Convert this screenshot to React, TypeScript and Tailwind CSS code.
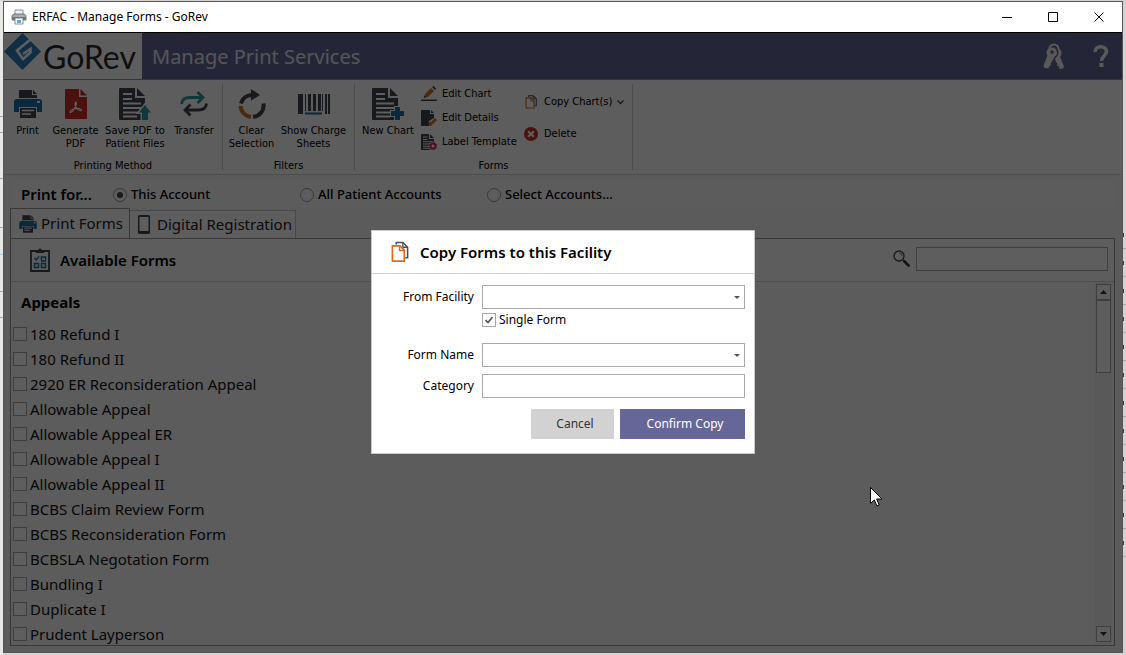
import React, { useState } from 'react';

const FORMS = [
  '180 Refund I',
  '180 Refund II',
  '2920 ER Reconsideration Appeal',
  'Allowable Appeal',
  'Allowable Appeal ER',
  'Allowable Appeal I',
  'Allowable Appeal II',
  'BCBS Claim Review Form',
  'BCBS Reconsideration Form',
  'BCBSLA Negotation Form',
  'Bundling I',
  'Duplicate I',
  'Prudent Layperson',
];

const ACCOUNT_OPTIONS = [
  { id: 'this', label: 'This Account' },
  { id: 'all', label: 'All Patient Accounts' },
  { id: 'select', label: 'Select Accounts...' },
];

const PrinterIcon = ({ className }: { className: string }) => (
  <svg className={className} viewBox="0 0 32 32">
    <path d="M7 2h13v5h5v3H7z" fill="#3f4450" />
    <path d="M21 2l4 4h-4z" fill="#3f4450" />
    <path d="M5 11h22a3 3 0 0 1 3 3v10h-5v-5H7v5H2V14a3 3 0 0 1 3-3z" fill="#1a73a8" />
    <rect x="25" y="13" width="3" height="2" fill="#fff" />
    <path d="M8 20h16v10H8z" fill="#3f4450" />
    <path d="M10 22.500h12M10 26h9" stroke="#fff" strokeWidth="1.500" />
  </svg>
);

const DocIcon = ({ className, children }: { className: string; children?: React.ReactNode }) => (
  <svg className={className} viewBox="0 0 32 32">
    <path d="M1 0h15v10h10v22H1a1 1 0 0 1-1-1V1a1 1 0 0 1 1-1z" fill="#3f4450" />
    <path d="M18 0l8 8h-8z" fill="#3f4450" />
    <path d="M4 6h9M4 11h9M4 15.500h18M4 20h18M4 24.500h18M4 28.500h14" stroke="#fff" strokeWidth="1.800" />
    {children}
  </svg>
);

const CopyIcon = ({ className }: { className: string }) => (
  <svg className={className} viewBox="0 0 20 22" fill="none">
    <path d="M5.500 3V1h7l5 5v11H15" stroke="#4a4f5c" strokeWidth="1.600" />
    <path d="M12.500 1v5h5" stroke="#4a4f5c" strokeWidth="1.400" />
    <path d="M1.500 4.500h8l4.500 4.500v11.500H1.500z" fill="#fff" stroke="#d0711f" strokeWidth="1.800" />
    <path d="M9 4.500V9.500h5" stroke="#d0711f" strokeWidth="1.500" />
  </svg>
);

const RibbonButton = ({ icon, label, className }: { icon: React.ReactNode; label: string; className: string }) => (
  <button className={`flex flex-col items-center ${className}`}>
    <span className="flex h-8 items-center justify-center">{icon}</span>
    <span className="mt-1 whitespace-pre text-center leading-[13px]">{label}</span>
  </button>
);

const SmallButton = ({ icon, label }: { icon: React.ReactNode; label: string }) => (
  <button className="flex h-6 items-center gap-[5px] whitespace-nowrap">
    <span className="flex w-4 justify-center">{icon}</span>
    {label}
  </button>
);

const RibbonGroup = ({ title, className, children }: { title: string; className: string; children: React.ReactNode }) => (
  <section className={`my-1 flex flex-col border-r border-[#cfcfcf] ${className}`}>
    <div className="flex min-h-0 flex-1 items-start pt-1">{children}</div>
    <h2 className="-mb-1 text-center leading-4">{title}</h2>
  </section>
);

const TitleBar = () => (
  <header className="flex h-[31px] shrink-0 items-center border-b border-black bg-white pl-[7px] text-xs text-black">
    <svg className="h-4 w-4" viewBox="0 0 16 16">
      <path d="M4 1h8v5H4z" fill="#eef2f6" stroke="#6b7480" strokeWidth="0.800" />
      <path d="M1 6.500L3 5h10l2 1.500V11H1z" fill="#a9adb3" stroke="#5a5f66" strokeWidth="0.800" />
      <path d="M1 8h14v3H1z" fill="#70757c" />
      <path d="M4 9h8v6H4z" fill="#fafcff" stroke="#6b7480" strokeWidth="0.800" />
      <path d="M6 11h4v3H6z" fill="#6aa7cf" />
    </svg>
    <span className="ml-[5px] flex-1">ERFAC - Manage Forms - GoRev</span>
    <div className="flex self-stretch">
      {[
        { name: 'Minimize', d: 'M0 5.500h10' },
        { name: 'Maximize', d: 'M0.500 0.500h9v9h-9z' },
        { name: 'Close', d: 'M0.500 0.500l9 9M9.500 0.500l-9 9' },
      ].map((b) => (
        <button key={b.name} aria-label={b.name} className="flex w-[46px] items-center justify-center">
          <svg className="h-[10px] w-[10px]" viewBox="0 0 10 10" fill="none" stroke="#000" strokeWidth="1">
            <path d={b.d} />
          </svg>
        </button>
      ))}
    </div>
  </header>
);

const Banner = () => (
  <div className="flex h-[47px] shrink-0 items-center border-b border-[#8d8da8] bg-[#666699]">
    <div className="flex h-full w-[138px] items-center bg-white">
      <svg className="h-[38px] w-[37px] shrink-0 self-start" viewBox="0 0 37 38">
        <path d="M18.500 0L37 18.500 18.500 37 0 18.500z" fill="#2f7cc0" />
        <path d="M27 6L13 17.500l6 8.500 7.500-6.500V16l-7.500 5" fill="none" stroke="#fff" strokeWidth="2.600" />
      </svg>
      <span className="pl-[2px] pt-px font-['Lato',sans-serif] text-[32px] leading-10 text-[#2a2a2a]">GoRev</span>
    </div>
    <h1 className="flex-1 pl-[10px] pt-[2px] text-xl text-[#e6e6ee]">Manage Print Services</h1>
    <button aria-label="Keys" className="mr-[28px]">
      <svg className="h-[26px] w-[22px]" viewBox="0 0 22 26">
        <path d="M6.500 6a4.500 4.500 0 0 1 9 0" fill="none" stroke="#f0f0f0" strokeWidth="2" />
        <path d="M14.500 5c3.500 1 5 4 3.500 7.500l-1 1.500 4 9.500-1 2-3.500.500-.500-2.500-2-1 .500-2-1.500-1.500-1-3.500c3-2 4.500-6 2.500-10.500z" fill="#f0f0f0" />
        <path
          fillRule="evenodd"
          d="M9 4.500a5 5 0 0 1 2.500 9.300L7.500 21l1 1-2 1-1 2.500-4-.500-1-2.500L4.500 12.500A5 5 0 0 1 9 4.500zM9 7.300a1.800 1.800 0 1 0 0 3.600 1.800 1.800 0 0 0 0-3.600z"
          fill="#f0f0f0"
        />
      </svg>
    </button>
    <button aria-label="Help" className="mr-[13px]">
      <svg className="h-[24px] w-[16px]" viewBox="0 0 16 24" fill="none">
        <path d="M2 8C2 1 13.500 1 13.500 7.500 13.500 11.500 8.500 12 8.500 17" stroke="#f0f0f0" strokeWidth="3.600" />
        <rect x="6.500" y="19" width="4" height="4" fill="#f0f0f0" />
      </svg>
    </button>
  </div>
);

const Ribbon = () => (
  <div className="flex h-[95px] shrink-0 border-b border-[#d0d0d0] bg-[#fbfbfb] font-['DejaVu_Sans_Condensed','Noto_Sans',sans-serif] text-[11px] text-black">
    <RibbonGroup title="Printing Method" className="w-[219px]">
      <RibbonButton className="w-[47px]" label="Print" icon={<PrinterIcon className="h-8 w-8" />} />
      <RibbonButton
        className="w-[49px]"
        label={'Generate\nPDF'}
        icon={
          <svg className="h-[30px] w-[22px]" viewBox="0 0 22 30">
            <path d="M1 0h13v8h8v21a1 1 0 0 1-1 1H1a1 1 0 0 1-1-1V1a1 1 0 0 1 1-1z" fill="#cc2f2a" />
            <path d="M15.500 0L22 6.500h-6.500z" fill="#cc2f2a" />
            <path d="M10.500 13c2 0 .500 4-2 8-1.500 2.500-3.500 3-3.500 2 0-2 5-4 9-3.500 3.500.500 3 2.500 1 2-3-.500-6-5-4.500-8.500z" fill="none" stroke="#fff" strokeWidth="1.200" />
          </svg>
        }
      />
      <RibbonButton
        className="w-[70px]"
        label={'Save PDF to\nPatient Files'}
        icon={
          <DocIcon className="h-8 w-8">
            <path d="M26 17l6 7.500h-3V32h-6v-7.500h-3z" fill="#fff" stroke="#fff" strokeWidth="3" />
            <path d="M26 17l6 7.500h-3V32h-6v-7.500h-3z" fill="#2b9a9a" />
          </DocIcon>
        }
      />
      <RibbonButton
        className="w-[48px]"
        label="Transfer"
        icon={
          <svg className="h-[26px] w-[28px]" viewBox="0 0 28 26" fill="none" strokeWidth="2.800">
            <path d="M1.500 13C2 8 5 6.500 10 6.500h12" stroke="#2b9a9a" />
            <path d="M17.500 1l5.500 5.500-5.500 5.500" stroke="#2b9a9a" />
            <path d="M26.500 12.500c-.500 5-3.500 6.500-8.500 6.500H6" stroke="#3f4450" />
            <path d="M10.500 13.500L5 19l5.500 5.500" stroke="#3f4450" />
          </svg>
        }
      />
    </RibbonGroup>

    <RibbonGroup title="Filters" className="w-[132px]">
      <RibbonButton
        className="w-[57px]"
        label={'Clear\nSelection'}
        icon={
          <svg className="h-[30px] w-[28px]" viewBox="0 0 28 30" fill="none" strokeWidth="4">
            <path d="M3 14.500A11.500 11.500 0 0 1 14 6h2" stroke="#3f4450" />
            <path d="M13 0l9 6-9 5.500z" fill="#3f4450" />
            <path d="M2.500 17A11.500 11.500 0 0 0 13 27.800" stroke="#d0711f" />
            <path d="M15 27.800A11.500 11.500 0 0 0 25.500 14.500" stroke="#3f4450" />
          </svg>
        }
      />
      <RibbonButton
        className="w-[67px]"
        label={'Show Charge\nSheets'}
        icon={
          <svg className="h-[21px] w-[32px]" viewBox="0 0 32 21" fill="#3f4450">
            <path d="M0 0h5v20H0zM7 0h1v17H7zM10 0h3v17h-3zM15 0h3v17h-3zM20 0h3v17h-3zM24 0h1v17h-1zM27 0h2v20h-2zM30 0h2v20h-2z" />
            <path d="M7 18.500h17v2H7z" fill="#1a73a8" />
          </svg>
        }
      />
    </RibbonGroup>

    <RibbonGroup title="Forms" className="w-[278px]">
      <RibbonButton
        className="w-[66px]"
        label="New Chart"
        icon={
          <DocIcon className="h-8 w-8">
            <path d="M23 19h5v4h4v5h-4v4h-5v-4h-4v-5h4z" fill="#fff" stroke="#fff" strokeWidth="2" />
            <path d="M23 19h5v4h4v5h-4v4h-5v-4h-4v-5h4z" fill="#1a73a8" />
          </DocIcon>
        }
      />
      <div className="-mt-[6px] flex w-[102px] flex-col">
        <SmallButton
          label="Edit Chart"
          icon={
            <svg className="h-4 w-4" viewBox="0 0 16 16">
              <path d="M3 11.500L4 8l6-6 3 3-6 6z" fill="#d0711f" />
              <path d="M11 1l1.500-1L15 2.500 14 4z" fill="#3f4450" />
              <path d="M2.500 12l1-2.500 1.500 1.500zM0 13.500h16V15H0z" fill="#3f4450" />
            </svg>
          }
        />
        <SmallButton
          label="Edit Details"
          icon={
            <svg className="h-4 w-4" viewBox="0 0 16 16">
              <path d="M0 0h9v4h4v4l-5 3v5H0z" fill="#3f4450" />
              <path d="M10 0l3 3h-3z" fill="#3f4450" />
              <path d="M10 12l4-4 2 2-4 4z" fill="#d0711f" />
              <circle cx="9.500" cy="14" r="2" fill="#d0711f" />
            </svg>
          }
        />
        <SmallButton
          label="Label Template"
          icon={
            <DocIcon className="h-4 w-4">
              <circle cx="24" cy="24" r="9" fill="#fff" />
              <circle cx="24" cy="24" r="5" fill="none" stroke="#c92a6a" strokeWidth="4" />
              <circle cx="24" cy="24" r="7.500" fill="none" stroke="#c92a6a" strokeWidth="2" strokeDasharray="3 2.900" />
            </DocIcon>
          }
        />
      </div>
      <div className="flex flex-col gap-2 pt-[2px]">
        <button className="flex h-6 items-center gap-[5px] whitespace-nowrap">
          <span className="flex w-4 justify-center">
            <CopyIcon className="h-[14px] w-[13px]" />
          </span>
          Copy Chart(s)
          <svg className="h-[5px] w-[7px]" viewBox="0 0 7 5" fill="none" stroke="#444" strokeWidth="1.400">
            <path d="M0.500 0.500l3 3 3-3" />
          </svg>
        </button>
        <SmallButton
          label="Delete"
          icon={
            <svg className="h-[14px] w-[14px]" viewBox="0 0 14 14">
              <circle cx="7" cy="7" r="7" fill="#cc2f2a" />
              <path d="M4.200 4.200l5.600 5.600M9.800 4.200l-5.600 5.600" stroke="#fff" strokeWidth="2.200" />
            </svg>
          }
        />
      </div>
    </RibbonGroup>
  </div>
);

const FormsList = () => (
  <div className="flex min-h-0 flex-1 justify-between overflow-hidden">
    <div>
      <h3 className="flex h-10 items-center pl-[10px] pt-px text-[15px] font-bold">Appeals</h3>
      <ul>
        {FORMS.map((form) => (
          <li key={form} className="flex h-[25px] items-center">
            <label className="flex items-center gap-[3px] pl-[2px] text-[15px] text-[#111]">
              <input type="checkbox" className="mb-[2px] h-[14px] w-[14px] appearance-none border border-[#a8a8a8] bg-white" />
              {form}
            </label>
          </li>
        ))}
      </ul>
    </div>
    <div className="mr-[2px] flex w-[17px] flex-col bg-[#f2f2f2] p-px pt-[2px]">
      <button aria-label="Scroll up" className="flex h-4 items-center justify-center border border-[#a8a8a8] bg-[#fbfbfb]">
        <svg className="h-1 w-[7px]" viewBox="0 0 7 4"><path d="M0 4l3.500-4L7 4z" fill="#333" /></svg>
      </button>
      <div className="h-[73px] border border-[#a8a8a8] bg-[#fbfbfb]" />
      <button aria-label="Scroll down" className="mb-[2px] mt-auto flex h-4 items-center justify-center border border-[#a8a8a8] bg-[#fbfbfb]">
        <svg className="h-1 w-[7px]" viewBox="0 0 7 4"><path d="M0 0l3.500 4L7 0z" fill="#333" /></svg>
      </button>
    </div>
  </div>
);

const SelectField = ({ id }: { id: string }) => (
  <div className="relative">
    <select id={id} className="block h-6 w-full appearance-none border border-[#a8a8a8] bg-white pl-1 pr-6" defaultValue="">
      <option value=""></option>
    </select>
    <svg className="pointer-events-none absolute right-[5px] top-[11px] h-[3px] w-[6px]" viewBox="0 0 6 3">
      <path d="M0 0h6L3 3z" fill="#555" />
    </svg>
  </div>
);

const CopyDialog = () => {
  const [singleForm, setSingleForm] = useState(true);
  const [category, setCategory] = useState('');

  return (
    <div role="dialog" aria-labelledby="copy-title" className="w-[384px] border border-[#c8c8c8] bg-white text-xs text-black">
      <div className="flex h-[43px] items-center gap-[10px] border-b border-[#d0d0d0] pl-[19px]">
        <CopyIcon className="h-[22px] w-[19px]" />
        <h2 id="copy-title" className="text-[15px] font-semibold">Copy Forms to this Facility</h2>
      </div>
      <form className="px-[9px] pb-[14px] pt-[11px]" onSubmit={(e) => e.preventDefault()}>
        <div className="grid grid-cols-[93px_1fr] items-center gap-x-2">
          <label htmlFor="from-facility" className="pt-px text-right">From Facility</label>
          <SelectField id="from-facility" />
          <label className="col-start-2 mb-[14px] mt-[2px] flex h-[18px] items-center gap-[3px]">
            <input
              type="checkbox"
              checked={singleForm}
              onChange={(e) => setSingleForm(e.target.checked)}
              className="peer h-[14px] w-[14px] appearance-none border border-[#a8a8a8] bg-white"
            />
            <svg className="pointer-events-none -ml-[14px] mr-[3px] hidden h-2 w-2 peer-checked:block" viewBox="0 0 8 8" fill="none" stroke="#555" strokeWidth="1.600">
              <path d="M0.500 4l2.500 2.500L7.500 1" />
            </svg>
            Single Form
          </label>
          <label htmlFor="form-name" className="pt-px text-right">Form Name</label>
          <SelectField id="form-name" />
          <label htmlFor="category" className="mt-[7px] pt-px text-right">Category</label>
          <input
            id="category"
            type="text"
            value={category}
            onChange={(e) => setCategory(e.target.value)}
            className="mt-[7px] h-6 w-full border border-[#a8a8a8] bg-white px-1"
          />
        </div>
        <div className="mt-[11px] flex justify-end gap-[6px]">
          <button type="button" className="h-[30px] w-[83px] bg-[#d2d2d2] pl-[5px] pt-px text-[#333]">Cancel</button>
          <button type="submit" className="h-[30px] w-[125px] bg-[#666699] pl-[5px] pt-px text-white">Confirm Copy</button>
        </div>
      </form>
    </div>
  );
};

const App: React.FC = () => {
  const [account, setAccount] = useState('this');

  return (
    <div className="flex h-screen w-full overflow-hidden bg-[#d4d2d2] pt-px font-['Noto_Sans',sans-serif] text-black">
      {/* slivers of the window behind */}
      <div className="flex w-[3px] shrink-0 flex-col overflow-hidden bg-[#e6e8e6] pt-[115px]">
        <div className="h-[17px] border-y border-[#aaa]" />
        <div className="mt-[45px] h-[50px] border-y border-[#aaa]" />
        <div className="mt-[6px] h-[21px] border-b border-[#a9c8d8]" />
        <div className="mt-[36px] h-[27px] border-y border-[#aaa]" />
      </div>
      <div className="mb-[2px] flex min-w-0 flex-1 flex-col border border-[#555]">
        <TitleBar />
        <div className="relative flex min-h-0 flex-1 flex-col bg-[#f6f6f6]">
          <Banner />
          <Ribbon />
          <div className="mx-[7px] mt-[6px] flex h-[27px] shrink-0 items-center bg-[#f9f9f9] pl-[10px]">
            <span className="w-[92px] text-[15px] font-semibold">Print for...</span>
            {ACCOUNT_OPTIONS.map((o) => (
              <label key={o.id} className="flex w-[187px] items-center gap-1 text-[13px] font-medium">
                <input
                  type="radio"
                  name="account"
                  checked={account === o.id}
                  onChange={() => setAccount(o.id)}
                  className="h-[14px] w-[14px] appearance-none rounded-full border border-[#999] bg-white bg-clip-content p-[3px] checked:bg-[#444]"
                />
                {o.label}
              </label>
            ))}
          </div>
          <div role="tablist" className="ml-[6px] flex h-[30px] shrink-0 items-end text-[15px] text-[#222]">
            <button role="tab" aria-selected="true" className="flex h-[30px] w-[120px] items-center gap-[3px] border border-b-0 border-[#999] bg-[#fbfbfb] pl-[7px]">
              <PrinterIcon className="h-5 w-5" />
              Print Forms
            </button>
            <button role="tab" aria-selected="false" className="flex h-7 w-[166px] items-center gap-[7px] border border-b-0 border-l-0 border-[#c4c4c4] bg-[#fbfbfb] pl-2">
              <svg className="h-[19px] w-3 shrink-0" viewBox="0 0 12 19">
                <path fillRule="evenodd" d="M1.500 0h9A1.500 1.500 0 0 1 12 1.500v16a1.500 1.500 0 0 1-1.500 1.500h-9A1.500 1.500 0 0 1 0 17.500v-16A1.500 1.500 0 0 1 1.500 0zM1.500 2v14h9V2z" fill="#3f4450" />
              </svg>
              Digital Registration
            </button>
          </div>
          <main className="mb-[6px] ml-[6px] mr-[7px] flex min-h-0 flex-1 flex-col border border-[#999] bg-[#f9f9f9]">
            <div className="flex h-[43px] shrink-0 items-center border-b border-[#d0d0d0] bg-[#fbfbfb] pl-[19px] pr-[6px]">
              <svg className="h-6 w-5" viewBox="0 0 20 24" fill="none">
                <path d="M1 3h18v20H1z" stroke="#3f4450" strokeWidth="1.800" />
                <path d="M6 4.500V2.500h2.500a1.500 1.500 0 0 1 3 0H14v2z" fill="#3f4450" stroke="#3f4450" />
                <path d="M4.500 10l1.800 2 2.700-3.500M11.500 9h4v4h-4zM4.500 15.500h4v4h-4zM11.500 15.500h4v4h-4z" stroke="#1a73a8" strokeWidth="1.400" />
              </svg>
              <h2 className="flex-1 pl-[10px] text-[15px] font-semibold">Available Forms</h2>
              <svg className="mb-1 mr-[6px] h-[17px] w-[17px]" viewBox="0 0 17 17" fill="none">
                <circle cx="6" cy="6" r="5" stroke="#444" strokeWidth="1.300" />
                <path d="M6 3a3 3 0 0 1 3 3" stroke="#888" />
                <path d="M9.500 9.500l2 2" stroke="#444" strokeWidth="1.500" />
                <path d="M11.500 11.500l4 4" stroke="#333" strokeWidth="2.800" strokeLinecap="round" />
              </svg>
              <input aria-label="Search forms" type="search" className="mb-[2px] h-6 w-[192px] border border-[#a8a8a8] bg-white px-1 text-[13px]" />
            </div>
            <FormsList />
          </main>
          <div className="absolute inset-0 flex items-center justify-center bg-black/63 pb-[2px]">
            <CopyDialog />
          </div>
        </div>
      </div>
      <div className="w-[3px] shrink-0 overflow-hidden pt-[220px]">
        {Array.from({ length: 12 }, (_, i) => (
          <div key={i} className="flex h-7 items-center border-b border-[#a5a5a5]">
            <div className="h-1 w-px bg-[#2c3f75]" />
          </div>
        ))}
      </div>
      {/* mouse pointer */}
      <svg className="pointer-events-none absolute left-[870px] top-[487px] h-[20px] w-[13px]" viewBox="0 0 13 20">
        <path d="M0.500 0.500v16l3.800-3.600 2.600 6 2.300-1-2.500-5.900h5.300z" fill="#fff" stroke="#000" />
      </svg>
    </div>
  );
};

export default App;
